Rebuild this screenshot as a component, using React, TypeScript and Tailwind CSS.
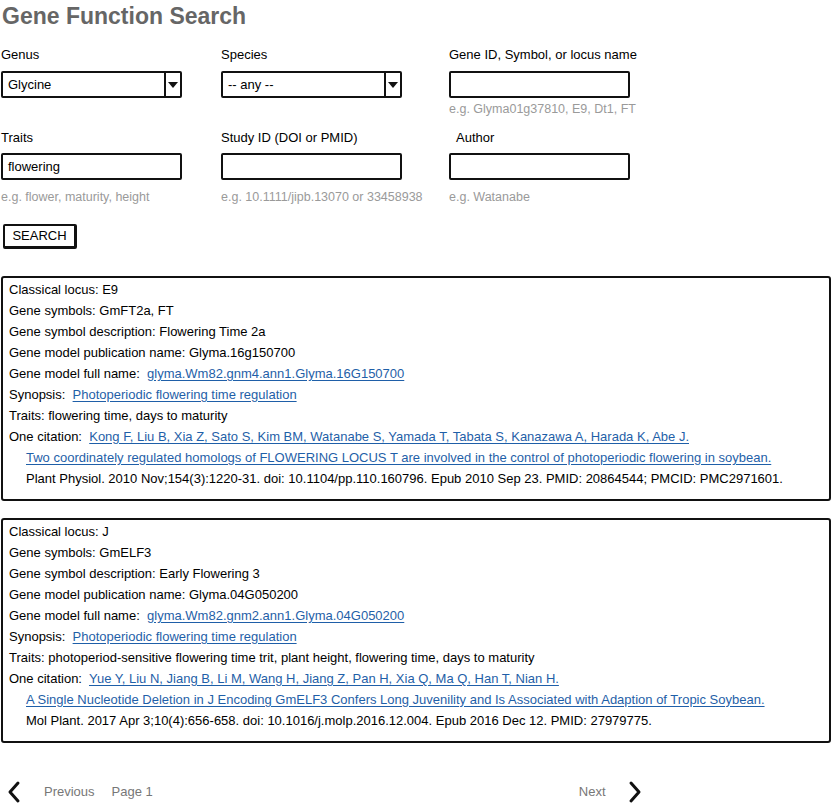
import React from 'react';

type Field = { label: string; value?: string; hint?: string; select?: boolean; indent?: boolean; gap: string; hintGap: string };

const font = { fontFamily: '"Liberation Sans", Arial, sans-serif' };

const Chevron: React.FC<{ dir: 'left' | 'right' }> = ({ dir }) => (
  <svg width="14" height="24" viewBox="0 0 14 24" fill="none">
    {dir === 'left' ? (
      <polyline points="11,3 3,12 11,21" stroke="#111" strokeWidth="3" strokeLinecap="round" strokeLinejoin="round" />
    ) : (
      <polyline points="3,3 11,12 3,21" stroke="#111" strokeWidth="3" strokeLinecap="round" strokeLinejoin="round" />
    )}
  </svg>
);

const Select: React.FC<{ value: string }> = ({ value }) => (
  <div className="flex h-[27px] w-[181px] items-stretch rounded-[2px] border-2 border-[#111] bg-white">
    <div className="flex flex-1 items-center pl-[5px] text-[13px] text-black">{value}</div>
    <div className="flex w-[16px] items-center justify-center border-l-2 border-[#111]">
      <div className="h-0 w-0 border-x-[5px] border-t-[6px] border-x-transparent border-t-[#111]" />
    </div>
  </div>
);

const Input: React.FC<{ value?: string }> = ({ value }) => (
  <div className="flex h-[27px] w-[181px] items-center rounded-[2px] border-2 border-[#111] bg-white pl-[5px] text-[13px] text-black">
    {value}
  </div>
);

const FormField: React.FC<Field> = ({ label, value, hint, select, indent, gap, hintGap }) => (
  <div className="flex flex-col">
    <div className={`h-[17px] text-[13px] leading-[17px] text-black ${indent ? 'pl-[7px]' : ''}`}>{label}</div>
    <div className={gap}>{select ? <Select value={value || ''} /> : <Input value={value} />}</div>
    <div className={`${hintGap} h-[17px] text-[12.5px] leading-[17px] text-[#9a9a9a]`}>{hint}</div>
  </div>
);

const A: React.FC<{ children: React.ReactNode }> = ({ children }) => (
  <span className="text-[#1f5fa8] underline decoration-[#1f5fa8] underline-offset-2">{children}</span>
);

interface Gene {
  locus: string;
  symbols: string;
  description: string;
  pubName: string;
  fullName: string;
  synopsis: string;
  traits: string;
  authors: string;
  title: string;
  source: string;
}

const genes: Gene[] = [
  {
    locus: 'E9',
    symbols: 'GmFT2a, FT',
    description: 'Flowering Time 2a',
    pubName: 'Glyma.16g150700',
    fullName: 'glyma.Wm82.gnm4.ann1.Glyma.16G150700',
    synopsis: 'Photoperiodic flowering time regulation',
    traits: 'flowering time, days to maturity',
    authors: 'Kong F, Liu B, Xia Z, Sato S, Kim BM, Watanabe S, Yamada T, Tabata S, Kanazawa A, Harada K, Abe J. ',
    title: 'Two coordinately regulated homologs of FLOWERING LOCUS T are involved in the control of photoperiodic flowering in soybean.',
    source: 'Plant Physiol. 2010 Nov;154(3):1220-31. doi: 10.1104/pp.110.160796. Epub 2010 Sep 23. PMID: 20864544; PMCID: PMC2971601.',
  },
  {
    locus: 'J',
    symbols: 'GmELF3',
    description: 'Early Flowering 3',
    pubName: 'Glyma.04G050200',
    fullName: 'glyma.Wm82.gnm2.ann1.Glyma.04G050200',
    synopsis: 'Photoperiodic flowering time regulation',
    traits: 'photoperiod-sensitive flowering time trit, plant height, flowering time, days to maturity',
    authors: 'Yue Y, Liu N, Jiang B, Li M, Wang H, Jiang Z, Pan H, Xia Q, Ma Q, Han T, Nian H. ',
    title: 'A Single Nucleotide Deletion in J Encoding GmELF3 Confers Long Juvenility and Is Associated with Adaption of Tropic Soybean. ',
    source: 'Mol Plant. 2017 Apr 3;10(4):656-658. doi: 10.1016/j.molp.2016.12.004. Epub 2016 Dec 12. PMID: 27979775.',
  },
];

const GeneCard: React.FC<{ gene: Gene }> = ({ gene }) => (
  <div className="rounded-[3px] border-2 border-[#111] bg-white pb-[10px] pl-[6px] pt-px text-[13px] leading-[21px] text-black">
    <div>Classical locus: {gene.locus}</div>
    <div>Gene symbols: {gene.symbols}</div>
    <div>Gene symbol description: {gene.description}</div>
    <div>Gene model publication name: {gene.pubName}</div>
    <div>
      Gene model full name:&nbsp; <A>{gene.fullName}</A>
    </div>
    <div>
      Synopsis:&nbsp; <A>{gene.synopsis}</A>
    </div>
    <div>Traits: {gene.traits}</div>
    <div>
      One citation:&nbsp; <A>{gene.authors}</A>
    </div>
    <div className="pl-[17px]">
      <A>{gene.title}</A>
    </div>
    <div className="pl-[17px]">{gene.source}</div>
  </div>
);

export default function App() {
  const row1 = { gap: 'mt-[8px]', hintGap: 'mt-[3px]' };
  const row2 = { gap: 'mt-[7px]', hintGap: 'mt-[9px]' };
  return (
    <div className="min-h-[804px] w-[832px] bg-white" style={font}>
      <h1 className="pl-[2px] pt-[2px] text-[23px] font-bold leading-[28px] text-[#666]">Gene Function Search</h1>

      <div className="mt-[16px] grid grid-cols-[220px_228px_1fr] gap-y-[11px] pl-[1px]">
        <FormField label="Genus" value="Glycine" select {...row1} />
        <FormField label="Species" value="-- any --" select {...row1} />
        <FormField label="Gene ID, Symbol, or locus name" hint="e.g. Glyma01g37810, E9, Dt1, FT" {...row1} />
        <FormField label="Traits" value="flowering" hint="e.g. flower, maturity, height" {...row2} />
        <FormField label="Study ID (DOI or PMID)" hint="e.g. 10.1111/jipb.13070 or 33458938" {...row2} />
        <FormField label="Author" hint="e.g. Watanabe" indent {...row2} />
      </div>

      <div className="mt-[17px] pl-[3px]">
        <button className="h-[25px] w-[74px] rounded-[2px] border-2 border-b-[3px] border-r-[3px] border-[#111] bg-white text-[13px] leading-none text-black">
          SEARCH
        </button>
      </div>

      <div className="mt-[27px] flex flex-col gap-[17px] px-[1px]">
        {genes.map((g) => (
          <GeneCard key={g.locus} gene={g} />
        ))}
      </div>

      <div className="mt-[37px] flex items-center text-[13px] text-[#777]">
        <div className="flex items-center pl-[7px]">
          <Chevron dir="left" />
          <span className="ml-[23px]">Previous</span>
          <span className="ml-[17px]">Page 1</span>
        </div>
        <div className="ml-[426px] flex items-center">
          <span>Next</span>
          <span className="ml-[22px]">
            <Chevron dir="right" />
          </span>
        </div>
      </div>
    </div>
  );
}
